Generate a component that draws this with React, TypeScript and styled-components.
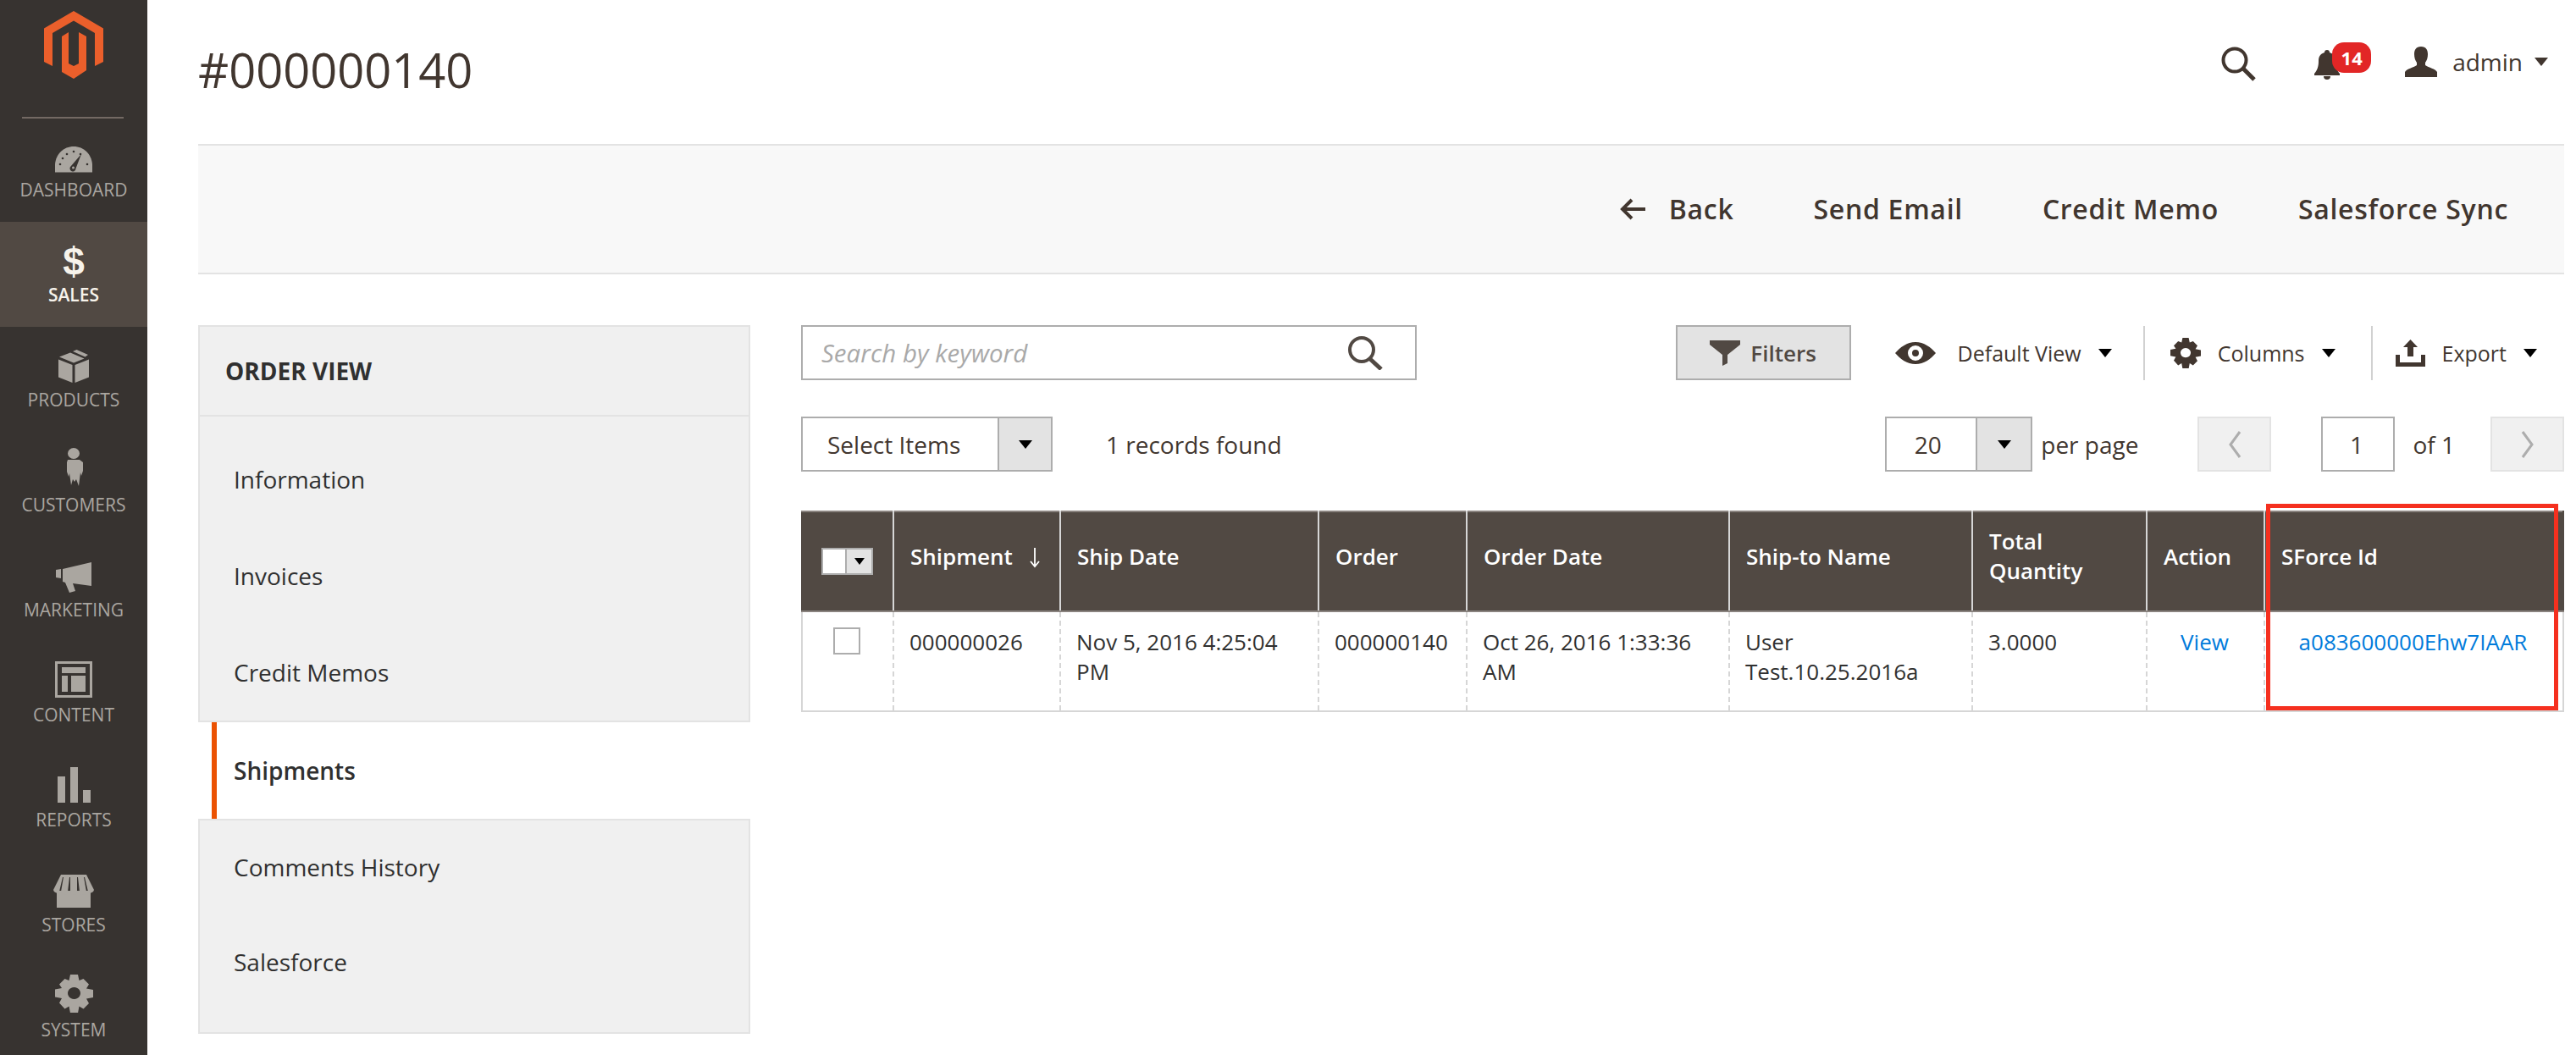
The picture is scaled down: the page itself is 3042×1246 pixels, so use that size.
import styled, { createGlobalStyle } from 'styled-components'

const GlobalStyle = createGlobalStyle`
  html, body {
    margin: 0;
    padding: 0;
    background: #fff;
    overflow: hidden;
  }
  body {
    font-family: 'Open Sans', 'Liberation Sans', sans-serif;
    font-size: 28px;
    color: #41362f;
  }
  * { box-sizing: border-box; }
`

const Page = styled.div`
  display: flex;
  width: 3042px;
  height: 1246px;
  overflow: hidden;
`

const Sidebar = styled.aside`
  width: 174px;
  flex: none;
  background: #373330;
`

const LogoBox = styled.div`
  height: 140px;
  margin: 0 28px -2px 26px;
  padding: 13px 0 0 26px;
  border-bottom: 2px solid #736963;
`

const NavItem = styled.div<{ $active?: boolean }>`
  height: 124px;
  padding-top: 16px;
  display: flex;
  flex-direction: column;
  align-items: center;
  background: ${({ $active }) => ($active ? '#514943' : 'transparent')};
  color: ${({ $active }) => ($active ? '#f7f3eb' : '#aaa6a0')};
`

const NavIcon = styled.div`
  height: 50px;
  display: flex;
  align-items: flex-end;
  justify-content: center;
`

const NavLabel = styled.div<{ $active?: boolean }>`
  margin-top: 8px;
  font-size: 21px;
  line-height: 24px;
  font-weight: ${({ $active }) => ($active ? 600 : 400)};
  text-transform: uppercase;
`

const Dollar = styled.span`
  font-family: 'Liberation Sans', sans-serif;
  font-weight: 700;
  font-size: 46px;
  line-height: 38px;
  color: #f7f3eb;
`

const Main = styled.main`
  flex: 1;
  min-width: 0;
  padding: 0 14px 0 60px;
`

const Header = styled.header`
  height: 170px;
  display: flex;
  align-items: flex-start;
  justify-content: space-between;
`

const Title = styled.h1`
  margin: 44px 0 0;
  font-size: 56px;
  line-height: 76px;
  font-weight: 400;
  color: #41362f;
`

const HeaderTools = styled.div`
  display: flex;
  align-items: flex-start;
  padding: 50px 19px 0 0;
`

const HeaderSearch = styled.div`
  padding-top: 5px;
  margin-right: 69px;
`

const Bell = styled.div`
  position: relative;
  width: 67px;
  padding-top: 9px;
  margin-right: 40px;
`

const Badge = styled.span`
  position: absolute;
  left: 21px;
  top: 0;
  width: 46px;
  height: 36px;
  border-radius: 14px;
  background: #e22626;
  color: #fff;
  font-size: 22px;
  line-height: 36px;
  font-weight: 700;
  text-align: center;
`

const UserBox = styled.div`
  display: flex;
  align-items: center;
  height: 46px;
`

const UserName = styled.span`
  margin: 0 14px 0 18px;
  font-size: 28px;
  line-height: 46px;
`

const Caret = styled.i<{ $size?: number }>`
  display: inline-block;
  flex: none;
  width: 0;
  height: 0;
  border-left: ${({ $size }) => $size ?? 8}px solid transparent;
  border-right: ${({ $size }) => $size ?? 8}px solid transparent;
  border-top: ${({ $size }) => ($size ?? 8) + 2}px solid #000;
`

const UserCaret = styled(Caret)`
  border-top-color: #41362f;
`

const ActionBar = styled.div`
  height: 154px;
  display: flex;
  align-items: center;
  justify-content: flex-end;
  gap: 94px;
  padding-right: 66px;
  background: #f8f8f8;
  border-top: 2px solid #e3e3e3;
  border-bottom: 2px solid #e3e3e3;
`

const ActionBtn = styled.span`
  display: flex;
  align-items: center;
  gap: 28px;
  font-size: 32px;
  line-height: 44px;
  font-weight: 600;
  letter-spacing: 0.7px;
  color: #41362f;
`

const Content = styled.div`
  display: grid;
  grid-template-columns: 652px 1fr;
  column-gap: 60px;
  margin-top: 60px;
`

const SideNav = styled.nav`
  display: flex;
  flex-direction: column;
`

const NavGroup = styled.div<{ $tail?: boolean }>`
  background: #f0f0f0;
  border: 2px solid #e3e3e3;
  padding-bottom: ${({ $tail }) => ($tail ? 26 : 0)}px;

  ${({ $tail }) => $tail && '& > div:first-child { height: 110px; }'}
`

const GroupTitle = styled.div`
  height: 106px;
  padding-left: 30px;
  margin-bottom: 17px;
  display: flex;
  align-items: center;
  border-bottom: 2px solid #e3e3e3;
  font-size: 28px;
  font-weight: 700;
  color: #303030;
  text-transform: uppercase;
`

const SideLink = styled.div`
  height: 114px;
  padding-left: 40px;
  display: flex;
  align-items: center;
  font-size: 28px;
  color: #303030;
`

const ActiveLink = styled.div`
  height: 114px;
  margin-left: 16px;
  padding-left: 20px;
  display: flex;
  align-items: center;
  background: #fff;
  border-left: 6px solid #eb5202;
  font-size: 28px;
  font-weight: 600;
  color: #303030;
`

const GridArea = styled.section`
  display: flex;
  flex-direction: column;
`

const ToolRow = styled.div`
  display: flex;
  align-items: center;
  justify-content: space-between;
  height: 65px;
  margin-bottom: 43px;

  & + & {
    margin-bottom: 46px;
  }
`

const SearchBox = styled.div`
  width: 727px;
  height: 65px;
  padding: 0 38px 0 22px;
  display: flex;
  align-items: center;
  justify-content: space-between;
  border: 2px solid #adadad;
  font-size: 29.5px;
  font-style: italic;
  color: #a9a9a9;
`

const RowSide = styled.div`
  display: flex;
  align-items: center;
`

const FilterBtn = styled.div`
  width: 207px;
  height: 65px;
  margin-right: 52px;
  display: flex;
  align-items: center;
  justify-content: center;
  gap: 12px;
  background: #e3e3e3;
  border: 2px solid #adadad;
  font-size: 26px;
  font-weight: 600;
  color: #514943;
`

const ToolItem = styled.div<{ $iconGap?: number }>`
  display: flex;
  align-items: center;
  gap: 20px;
  font-size: 25px;
  color: #41362f;

  & > svg {
    margin-right: ${({ $iconGap }) => $iconGap ?? 0}px;
  }
`

const ToolSep = styled.div`
  width: 2px;
  height: 64px;
  margin: 0 30px 0 37px;
  background: #d1d1d1;
`

const ExportSep = styled(ToolSep)`
  margin: 0 27px 0 42px;
`

const ToolEnd = styled.div`
  width: 32px;
`

const SelectBox = styled.div<{ $w: number; $btn: number; $pad?: number; $padEnd?: number }>`
  display: flex;
  width: ${({ $w }) => $w}px;
  height: 65px;
  border: 2px solid #adadad;
  font-size: 28px;
  color: #41362f;

  & > span:first-child {
    flex: 1;
    display: flex;
    align-items: center;
    justify-content: ${({ $pad }) => ($pad ? 'flex-start' : 'center')};
    padding-left: ${({ $pad }) => $pad ?? 0}px;
    padding-right: ${({ $padEnd }) => $padEnd ?? 0}px;
  }
  & > span:last-child {
    width: ${({ $btn }) => $btn}px;
    display: flex;
    align-items: center;
    justify-content: center;
    background: #e3e3e3;
    border-left: 2px solid #adadad;
  }
`

const Found = styled.span`
  margin-left: 63px;
  font-size: 28px;
`

const PerPage = styled.span`
  margin: 0 70px 0 10px;
  font-size: 28px;
`

const PagerBtn = styled.div`
  width: 87px;
  height: 65px;
  display: flex;
  align-items: center;
  justify-content: center;
  background: #f0f0f0;
  border: 2px solid #e3e3e3;
`

const PageInput = styled.div`
  width: 87px;
  height: 65px;
  margin-left: 59px;
  padding-right: 4px;
  display: flex;
  align-items: center;
  justify-content: center;
  border: 2px solid #adadad;
  font-size: 28px;
`

const OfPages = styled.span`
  margin: 0 42px 0 21px;
  font-size: 28px;
`

const TableWrap = styled.div`
  position: relative;
  width: 2080px;
`

const Table = styled.table`
  width: 2080px;
  table-layout: fixed;
  border-collapse: collapse;
`

const Th = styled.th`
  height: 118px;
  padding: 0 19px 12px;
  background: #514943;
  border: 2px solid #8a837f;
  border-left: 2px solid #d6d6d6;
  border-right: 2px solid #d6d6d6;
  text-align: left;
  color: #fff;
  font-size: 26px;
  line-height: 35px;
  font-weight: 600;
  vertical-align: middle;
  white-space: nowrap;

  &:first-child { border-left-color: #514943; }
  &:last-child { border-right-color: #514943; }
`

const SortArrow = styled.svg`
  margin-left: 20px;
  vertical-align: -4px;
`

const Td = styled.td<{ $center?: boolean }>`
  height: 118px;
  padding: 18px 20px 0 18px;
  background: #fff;
  border: 2px dashed #d6d6d6;
  border-bottom: 2px solid #d6d6d6;
  text-align: ${({ $center }) => ($center ? 'center' : 'left')};
  vertical-align: top;
  font-size: 26px;
  line-height: 35px;
  color: #303030;

  &:first-child { border-left-style: solid; }
  &:last-child { border-right-style: solid; }
`

const Link = styled.a`
  color: #007bdb;
`

const HeadCheck = styled.div`
  display: flex;
  width: 61px;
  height: 32px;
  margin: 12px 0 0 3px;
  border: 2px solid #adadad;
  background: #fff;

  & > span {
    margin-left: auto;
    width: 31px;
    display: flex;
    align-items: center;
    justify-content: center;
    background: #e3e3e3;
    border-left: 2px solid #adadad;
  }
`

const RowCheck = styled.div`
  width: 32px;
  height: 32px;
  margin-left: 18px;
  border: 2px solid #adadad;
  background: #fff;
`

const Highlight = styled.div`
  position: absolute;
  left: 1730px;
  top: -8px;
  width: 345px;
  height: 244px;
  border: 5px solid #f5301f;
  pointer-events: none;
`

const gearPath =
  'M18 0h9l1.500 7 5-2 6.500 6.500-3 5 8 1.500v9l-8 1.500 3 5.500-6.500 6.500-5-3-1.500 8h-9l-1.500-8-5 3L5 33.500 8 28 0 26.500v-9L8 16l-3-4.500L11.500 5l5 2zM22.500 15a7.500 7 0 1 0 .01 0z'

const navIcons: Record<string, JSX.Element> = {
  Dashboard: (
    <svg width="44" height="31" viewBox="0 0 44 31" fill="#aaa6a0">
      <path d="M0 30.500V21C1 9 10 0 22 0s21 9 22 21v9.500z" />
      <g fill="#373330">
        <circle cx="6" cy="21" r="1.300" />
        <circle cx="9" cy="14" r="1.300" />
        <circle cx="14" cy="9" r="1.300" />
        <circle cx="22" cy="6" r="1.300" />
        <circle cx="30" cy="9" r="1.300" />
        <circle cx="38" cy="21" r="1.300" />
        <path d="M18.500 23.500L31 9l-6.500 17a3.500 3.500 0 1 1-6-2.500z" />
      </g>
      <circle cx="21.500" cy="25" r="1.500" />
    </svg>
  ),
  Products: (
    <svg width="36" height="40" viewBox="0 0 36 40" fill="#aaa6a0">
      <path d="M0 12.500L16.500 19V40L0 33.500zM36 12.500L19.500 19V40L36 33.500z" />
      <path d="M1 9.500L14 4.500 30.500 11.500 18 16.500zM17 3L21.500 1 35 7 31.500 9.500z" />
    </svg>
  ),
  Customers: (
    <svg width="22" height="47" viewBox="0 0 22 47" fill="#aaa6a0">
      <ellipse cx="11" cy="6.500" rx="7" ry="6.500" />
      <path d="M4 14h14l4 3v10l-2 6-1-4-2 16-3-8-2 3-2-3-2 7-2-14-1 4-2-6V17z" />
    </svg>
  ),
  Marketing: (
    <svg width="42" height="36" viewBox="0 0 42 36" fill="#aaa6a0">
      <path d="M0 9l6-1v11l-6-1zM8 8L42 0v28l-22-3 3 9-7 2-5-12-3-1z" />
    </svg>
  ),
  Content: (
    <svg width="44" height="43" viewBox="0 0 44 43" fill="#aaa6a0">
      <path d="M0 0h44v43H0zM3 3v37h38V3z" fillRule="evenodd" />
      <path d="M8 7h28v7H8zM8 17h7v19H8zM19 17h17v19H19z" />
    </svg>
  ),
  Reports: (
    <svg width="39" height="42" viewBox="0 0 39 42">
      <path fill="#aaa6a0" d="M0 11h9v31H0zM15 0h9v42h-9zM30 27h9v15h-9z" />
    </svg>
  ),
  Stores: (
    <svg width="48" height="39" viewBox="0 0 48 39" fill="#aaa6a0">
      <path d="M4 19h40v20H4z" />
      <path d="M9 0h30l9 18a4 4 0 0 1-7 2l-4-17h-1l3 17a4 4 0 0 1-8 0l-2-17h-1v17a4 4 0 0 1-8 0V3h-1l-2 17a4 4 0 0 1-8 0L12 3h-1L7 20a4 4 0 0 1-7-2z" />
    </svg>
  ),
  System: (
    <svg width="45" height="45" viewBox="0 0 45 45" fill="#aaa6a0">
      <path fillRule="evenodd" d={gearPath} />
    </svg>
  ),
}

const navItems = ['Dashboard', 'Sales', 'Products', 'Customers', 'Marketing', 'Content', 'Reports', 'Stores', 'System']

const columns = [108, 197, 305, 175, 310, 287, 206, 139, 353]

export default function App() {
  return (
    <Page>
      <GlobalStyle />
      <Sidebar>
        <LogoBox>
          <svg width="70" height="80" viewBox="0 0 70 80" fill="#eb5f2b">
            <path d="M35 0L70 20.500V60L60 65V26L35 11.500 10 26V65L0 60V20.500z" />
            <path d="M21 30L29 25V62L35 65 41 62V25L50 30V70L35 80 21 72z" />
          </svg>
        </LogoBox>
        {navItems.map((name) => (
          <NavItem key={name} $active={name === 'Sales'}>
            <NavIcon>{name === 'Sales' ? <Dollar>$</Dollar> : navIcons[name]}</NavIcon>
            <NavLabel $active={name === 'Sales'}>{name}</NavLabel>
          </NavItem>
        ))}
      </Sidebar>
      <Main>
        <Header>
          <Title>#000000140</Title>
          <HeaderTools>
            <HeaderSearch>
              <svg width="41" height="41" viewBox="0 0 41 41" fill="none" stroke="#41362f">
                <circle cx="16" cy="16" r="13.500" strokeWidth="4" />
                <path d="M26 26l13 13" strokeWidth="5" />
              </svg>
            </HeaderSearch>
            <Bell>
              <svg width="30" height="35" viewBox="0 0 30 35" fill="#41362f">
                <path d="M15 0a3 3 0 0 1 3 3c5 1.500 7 5 7 10 0 6 1 10 5 15v2H0v-2c4-5 5-9 5-15 0-5 2-8.500 7-10a3 3 0 0 1 3-3zM11 31h8a4 4 0 0 1-8 0z" />
              </svg>
              <Badge>14</Badge>
            </Bell>
            <UserBox>
              <svg width="38" height="36" viewBox="0 0 38 36" fill="#41362f">
                <path d="M19 0c6 0 8 4 8 9 0 4-1 7-3 10v3c4 3 12 4 14 8v6H0v-6c2-4 10-5 14-8v-3c-2-3-3-6-3-10 0-5 2-9 8-9z" />
              </svg>
              <UserName>admin</UserName>
              <UserCaret />
            </UserBox>
          </HeaderTools>
        </Header>
        <ActionBar>
          <ActionBtn>
            <svg width="30" height="26" viewBox="0 0 30 26" fill="none" stroke="#41362f" strokeWidth="4">
              <path d="M30 13H4M14 2L3 13l11 11" />
            </svg>
            Back
          </ActionBtn>
          <ActionBtn>Send Email</ActionBtn>
          <ActionBtn>Credit Memo</ActionBtn>
          <ActionBtn>Salesforce Sync</ActionBtn>
        </ActionBar>
        <Content>
          <SideNav>
            <NavGroup>
              <GroupTitle>Order View</GroupTitle>
              <SideLink>Information</SideLink>
              <SideLink>Invoices</SideLink>
              <SideLink>Credit Memos</SideLink>
            </NavGroup>
            <ActiveLink>Shipments</ActiveLink>
            <NavGroup $tail>
              <SideLink>Comments History</SideLink>
              <SideLink>Salesforce</SideLink>
            </NavGroup>
          </SideNav>
          <GridArea>
            <ToolRow>
              <SearchBox>
                Search by keyword
                <svg width="42" height="40" viewBox="0 0 42 40" fill="none" stroke="#514943">
                  <circle cx="17" cy="16" r="14" strokeWidth="4" />
                  <path d="M27 27l13 12" strokeWidth="5" />
                </svg>
              </SearchBox>
              <RowSide>
                <FilterBtn>
                  <svg width="36" height="30" viewBox="0 0 36 30" fill="#514943">
                    <path d="M0 0h36v5L21 17v10l-6 3V17L0 5z" />
                  </svg>
                  Filters
                </FilterBtn>
                <ToolItem $iconGap={6}>
                  <svg width="48" height="26" viewBox="0 0 48 26" fill="#41362f">
                    <path
                      fillRule="evenodd"
                      d="M24 0c10 0 18 6 24 13-6 7-14 13-24 13S6 20 0 13C6 6 14 0 24 0zm0 4a9 9 0 1 0 0 18 9 9 0 0 0 0-18zm0 5a4 4 0 1 1 0 8 4 4 0 0 1 0-8z"
                    />
                  </svg>
                  Default View
                  <Caret />
                </ToolItem>
                <ToolSep />
                <ToolItem>
                  <svg width="36" height="36" viewBox="0 0 45 45" fill="#41362f">
                    <path fillRule="evenodd" d={gearPath} />
                  </svg>
                  Columns
                  <Caret />
                </ToolItem>
                <ExportSep />
                <ToolItem>
                  <svg width="35" height="32" viewBox="0 0 35 32" fill="#41362f">
                    <path d="M17.500 0L26 9h-5v11h-7V9H9zM0 18h5v9h25v-9h5v14H0z" />
                  </svg>
                  Export
                  <Caret />
                </ToolItem>
                <ToolEnd />
              </RowSide>
            </ToolRow>
            <ToolRow>
              <RowSide>
                <SelectBox $w={297} $btn={63} $pad={29}>
                  <span>Select Items</span>
                  <span>
                    <Caret />
                  </span>
                </SelectBox>
                <Found>1 records found</Found>
              </RowSide>
              <RowSide>
                <SelectBox $w={174} $btn={65} $padEnd={8}>
                  <span>20</span>
                  <span>
                    <Caret />
                  </span>
                </SelectBox>
                <PerPage>per page</PerPage>
                <PagerBtn>
                  <svg width="16" height="32" viewBox="0 0 16 32" fill="none" stroke="#adadad" strokeWidth="3">
                    <path d="M14 1L3 16l11 15" />
                  </svg>
                </PagerBtn>
                <PageInput>1</PageInput>
                <OfPages>of 1</OfPages>
                <PagerBtn>
                  <svg width="16" height="32" viewBox="0 0 16 32" fill="none" stroke="#adadad" strokeWidth="3">
                    <path d="M2 1l11 15L2 31" />
                  </svg>
                </PagerBtn>
              </RowSide>
            </ToolRow>
            <TableWrap>
              <Table>
                <colgroup>
                  {columns.map((w, i) => (
                    <col key={i} width={w} />
                  ))}
                </colgroup>
                <thead>
                  <tr>
                    <Th>
                      <HeadCheck>
                        <span>
                          <Caret $size={6} />
                        </span>
                      </HeadCheck>
                    </Th>
                    <Th>
                      Shipment
                      <SortArrow width="12" height="24" viewBox="0 0 12 24" fill="none" stroke="#fff" strokeWidth="1.800">
                        <path d="M6 0v22M1 16l5 6 5-6" />
                      </SortArrow>
                    </Th>
                    <Th>Ship Date</Th>
                    <Th>Order</Th>
                    <Th>Order Date</Th>
                    <Th>Ship-to Name</Th>
                    <Th>
                      Total
                      <br />
                      Quantity
                    </Th>
                    <Th>Action</Th>
                    <Th>SForce Id</Th>
                  </tr>
                </thead>
                <tbody>
                  <tr>
                    <Td>
                      <RowCheck />
                    </Td>
                    <Td>000000026</Td>
                    <Td>Nov 5, 2016 4:25:04 PM</Td>
                    <Td>000000140</Td>
                    <Td>Oct 26, 2016 1:33:36 AM</Td>
                    <Td>User Test.10.25.2016a</Td>
                    <Td>3.0000</Td>
                    <Td $center>
                      <Link>View</Link>
                    </Td>
                    <Td $center>
                      <Link>a083600000Ehw7IAAR</Link>
                    </Td>
                  </tr>
                </tbody>
              </Table>
              <Highlight />
            </TableWrap>
          </GridArea>
        </Content>
      </Main>
    </Page>
  )
}
